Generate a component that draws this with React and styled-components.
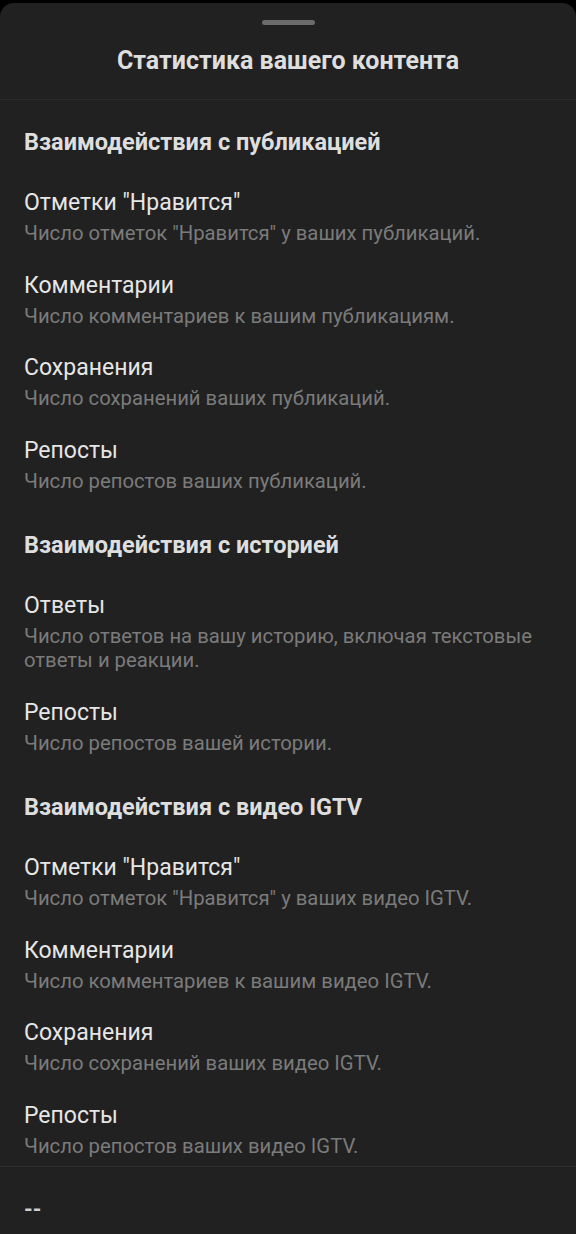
import React from "react";
import styled, { createGlobalStyle } from "styled-components";

const GlobalStyle = createGlobalStyle`
  html, body {
    margin: 0;
    padding: 0;
    background: #000;
  }
  body {
    font-family: Roboto, "Noto Sans", "Liberation Sans", sans-serif;
    -webkit-font-smoothing: antialiased;
  }
`;

const Sheet = styled.div`
  margin-top: 3px;
  min-height: 1231px;
  background: #212121;
  border-radius: 14px 14px 0 0;
  display: flex;
  flex-direction: column;
`;

const Header = styled.div`
  display: flex;
  flex-direction: column;
  align-items: center;
  padding-top: 17px;
  padding-bottom: 23px;
  border-bottom: 1px solid #2c2c2c;
`;

const Grabber = styled.div`
  width: 53px;
  height: 5px;
  border-radius: 3px;
  background: #6b6b6b;
`;

const Title = styled.h1`
  margin: 21px 0 0;
  font-size: 25px;
  line-height: 30px;
  font-weight: 700;
  color: #dedede;
`;

const Section = styled.section`
  padding: 25px 24px 0;

  &:first-of-type {
    padding-top: 28px;
  }

  &:last-of-type > div:last-child {
    padding-bottom: 8px;
  }
`;

const SectionTitle = styled.h2`
  margin: 0 0 20px;
  font-size: 23.5px;
  line-height: 28px;
  font-weight: 700;
  color: #dedede;
`;

const Item = styled.div`
  padding: 13.25px 0;
  display: flex;
  flex-direction: column;
  gap: 4px;
`;

const ItemTitle = styled.div`
  font-size: 23px;
  line-height: 28px;
  color: #e6e6e6;
`;

const ItemText = styled.div`
  font-size: 20.3px;
  line-height: 24px;
  color: #7b7b7b;
`;

const Footer = styled.div`
  border-top: 1px solid #2c2c2c;
  padding: 29px 24px;
  font-size: 22px;
  line-height: 28px;
  font-weight: 700;
  color: #d0d0d0;
`;

const sections = [
  {
    title: "Взаимодействия с публикацией",
    items: [
      ["Отметки \"Нравится\"", "Число отметок \"Нравится\" у ваших публикаций."],
      ["Комментарии", "Число комментариев к вашим публикациям."],
      ["Сохранения", "Число сохранений ваших публикаций."],
      ["Репосты", "Число репостов ваших публикаций."],
    ],
  },
  {
    title: "Взаимодействия с историей",
    items: [
      ["Ответы", "Число ответов на вашу историю, включая текстовые ответы и реакции."],
      ["Репосты", "Число репостов вашей истории."],
    ],
  },
  {
    title: "Взаимодействия с видео IGTV",
    items: [
      ["Отметки \"Нравится\"", "Число отметок \"Нравится\" у ваших видео IGTV."],
      ["Комментарии", "Число комментариев к вашим видео IGTV."],
      ["Сохранения", "Число сохранений ваших видео IGTV."],
      ["Репосты", "Число репостов ваших видео IGTV."],
    ],
  },
];

const App = () => {
  return (
    <>
      <GlobalStyle />
      <Sheet>
        <Header>
          <Grabber />
          <Title>Статистика вашего контента</Title>
        </Header>
        {sections.map((section) => (
          <Section key={section.title}>
            <SectionTitle>{section.title}</SectionTitle>
            {section.items.map(([name, desc]) => (
              <Item key={name + desc}>
                <ItemTitle>{name}</ItemTitle>
                <ItemText>{desc}</ItemText>
              </Item>
            ))}
          </Section>
        ))}
        <Footer>--</Footer>
      </Sheet>
    </>
  );
};

export default App;
